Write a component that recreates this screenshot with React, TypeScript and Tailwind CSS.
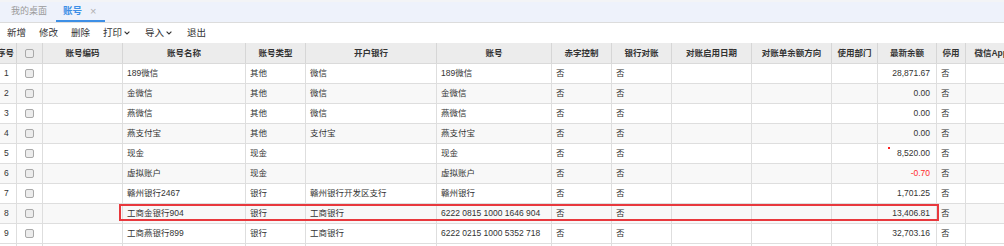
import React from "react";

const widths = [17, 26, 80, 123, 60, 131, 115, 60, 60, 80, 80, 46, 59, 29, 60];
const headers = [
  "序号",
  "",
  "账号编码",
  "账号名称",
  "账号类型",
  "开户银行",
  "账号",
  "赤字控制",
  "银行对账",
  "对账启用日期",
  "对账单余额方向",
  "使用部门",
  "最新余额",
  "停用",
  "微信AppID",
];

type Row = {
  name: string;
  type: string;
  bank: string;
  acct: string;
  bal: string;
  neg?: boolean;
  dot?: boolean;
};

const rows: Row[] = [
  { name: "189微信", type: "其他", bank: "微信", acct: "189微信", bal: "28,871.67" },
  { name: "金微信", type: "其他", bank: "微信", acct: "金微信", bal: "0.00" },
  { name: "燕微信", type: "其他", bank: "微信", acct: "燕微信", bal: "0.00" },
  { name: "燕支付宝", type: "其他", bank: "支付宝", acct: "燕支付宝", bal: "0.00" },
  { name: "现金", type: "现金", bank: "", acct: "现金", bal: "8,520.00", dot: true },
  { name: "虚拟账户", type: "现金", bank: "", acct: "虚拟账户", bal: "-0.70", neg: true },
  { name: "赣州银行2467", type: "银行", bank: "赣州银行开发区支行", acct: "赣州银行", bal: "1,701.25" },
  { name: "工商金银行904", type: "银行", bank: "工商银行", acct: "6222 0815 1000 1646 904", bal: "13,406.81" },
  { name: "工商燕银行899", type: "银行", bank: "工商银行", acct: "6222 0215 1000 5352 718", bal: "32,703.16" },
];

const font = { fontFamily: '"Liberation Sans", "Noto Sans CJK SC", sans-serif' };

function Checkbox() {
  return (
    <span className="block w-[9px] h-[9px] rounded-[2px] border border-[#a9a9a9] bg-[#ececec]" />
  );
}

function Chevron() {
  return (
    <svg width="6" height="4" viewBox="0 0 6 4" className="ml-[2px]">
      <path d="M0.6 0.6 L3 3 L5.4 0.6" fill="none" stroke="#333" strokeWidth="1.1" />
    </svg>
  );
}

export default function App() {
  return (
    <div className="w-[1004px] h-[246px] overflow-hidden bg-white text-[#333]" style={font}>
      {/* tab bar */}
      <div className="h-[23px] bg-[#eef2fb] border-t-2 border-t-[#f3f4f6] border-b border-b-[#dcdcdc] flex items-end">
        <div className="h-full flex items-center pl-[11px] pr-[9px] text-[9px] text-[#9a9a9a]">我的桌面</div>
        <div className="h-full flex items-center w-[49px] pl-[7px] border-b-2 border-b-[#3d8fe6] text-[9.5px]">
          <span className="text-[#3d8fe6] font-bold">账号</span>
          <span className="ml-[8px] text-[#b0b0b0] text-[11px] leading-none">×</span>
        </div>
      </div>
      {/* toolbar */}
      <div className="h-[20px] flex items-center text-[9.5px] text-[#333] pl-[7px]">
        <span className="mr-[13px]">新增</span>
        <span className="mr-[13px]">修改</span>
        <span className="mr-[13px]">删除</span>
        <span className="mr-[15px] flex items-center">打印<Chevron /></span>
        <span className="mr-[15px] flex items-center">导入<Chevron /></span>
        <span>退出</span>
      </div>
      {/* grid */}
      <div className="relative">
        <div className="flex h-[21px] bg-[#ececec] border-b border-[#dadada] text-[8.5px] font-bold text-[#333]">
          {headers.map((h, i) => (
            <div
              key={i}
              style={{ width: widths[i] }}
              className={
                "shrink-0 h-full border-r border-[#d6d6d6] flex items-center overflow-hidden whitespace-nowrap " +
                (i === 0 ? "justify-end pr-[2px]" : "justify-center")
              }
            >
              {i === 1 ? <Checkbox /> : h}
            </div>
          ))}
        </div>
        {rows.map((r, idx) => {
          const cells: React.ReactNode[] = [
            String(idx + 1),
            <Checkbox key="c" />,
            "",
            r.name,
            r.type,
            r.bank,
            r.acct,
            "否",
            "否",
            "",
            "",
            "",
            r.bal,
            "否",
            "",
          ];
          return (
            <div
              key={idx}
              className={
                "flex h-[20px] border-b border-[#dedede] text-[8.5px] text-[#333] " +
                (idx % 2 === 1 ? "bg-[#f8f8f8]" : "bg-white")
              }
            >
              {cells.map((c, i) => (
                <div
                  key={i}
                  style={{ width: widths[i] }}
                  className={
                    "relative shrink-0 h-full border-r border-[#dedede] flex items-center overflow-hidden whitespace-nowrap " +
                    (i === 1
                      ? "justify-center"
                      : i === 12
                      ? "justify-end pr-[6px]"
                      : "pl-[4px]") +
                    (i === 12 && r.neg ? " text-[#ff2a2a]" : "")
                  }
                >
                  {i === 12 && r.dot ? (
                    <span className="absolute left-[10px] top-[3px] w-[2px] h-[2px] bg-[#ff2020]" />
                  ) : null}
                  {c}
                </div>
              ))}
            </div>
          );
        })}
        <div className="h-[4px] flex">
          {widths.map((w, i) => (
            <div key={i} style={{ width: w }} className="shrink-0 h-full border-r border-[#dedede]" />
          ))}
        </div>
        {/* highlight box */}
        <div className="absolute left-[119px] top-[161px] w-[820px] h-[17px] border-2 border-[#e8383d] pointer-events-none" />
      </div>
    </div>
  );
}
